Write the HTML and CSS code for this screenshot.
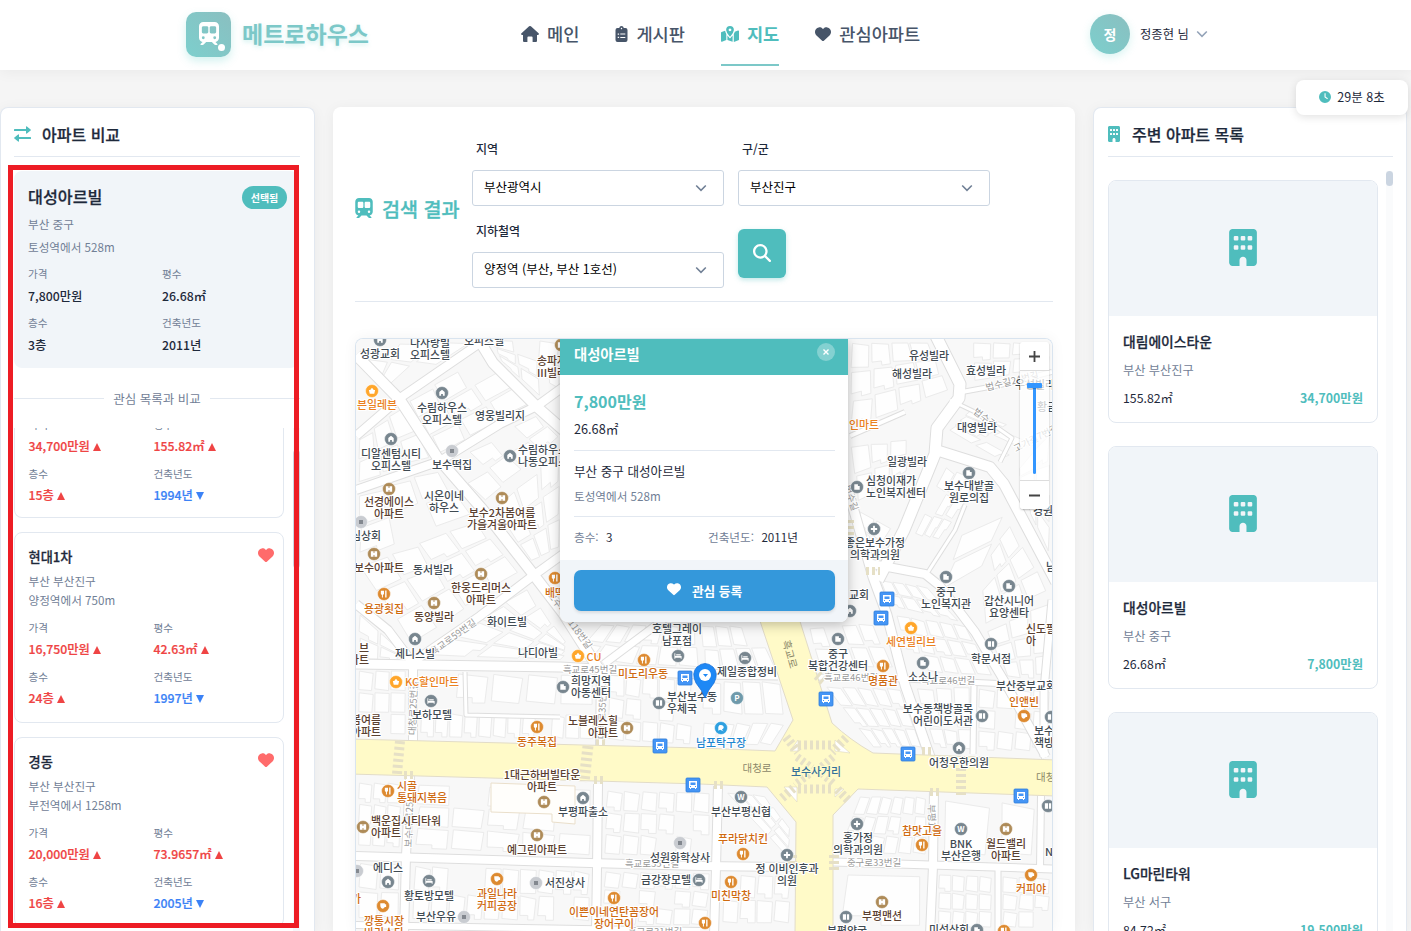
FILE: index.html
```html
<!DOCTYPE html>
<html lang="ko">
<head>
<meta charset="utf-8">
<title>메트로하우스</title>
<link rel="stylesheet" href="styles.css">
</head>
<body>
<svg class="sprite" aria-hidden="true">
  <symbol id="i-heart" viewBox="0 0 512 512"><path d="M47.6 300.4L228.3 469.1c7.5 7 17.4 10.9 27.7 10.9s20.2-3.9 27.7-10.9L464.4 300.4c30.4-28.3 47.6-68 47.6-109.5v-5.8c0-69.9-50.5-129.5-119.4-141C347 36.5 300.6 51.4 268 84L256 96 244 84c-32.6-32.6-79-47.5-124.6-39.9C50.5 55.6 0 115.2 0 185.1v5.8c0 41.5 17.2 81.2 47.6 109.5z"/></symbol>
  <symbol id="i-train" viewBox="0 0 448 512"><path d="M96 0C43 0 0 43 0 96V352c0 48 35.2 87.7 81.1 94.9l-46 46C28.1 499.9 33.1 512 43 512H82.7c8.5 0 16.6-3.4 22.6-9.4L160 448H288l54.6 54.6c6 6 14.1 9.4 22.6 9.4H405c10 0 15-12.1 7.9-19.1l-46-46c46-7.1 81.1-46.9 81.1-94.9V96c0-53-43-96-96-96H96zM64 128c0-17.7 14.3-32 32-32h80c17.7 0 32 14.3 32 32v96c0 17.7-14.3 32-32 32H96c-17.7 0-32-14.3-32-32V128zM272 96h80c17.7 0 32 14.3 32 32v96c0 17.7-14.3 32-32 32H272c-17.7 0-32-14.3-32-32V128c0-17.7 14.3-32 32-32zM64 352a32 32 0 1 1 64 0 32 32 0 1 1-64 0zm288-32a32 32 0 1 1 0 64 32 32 0 1 1 0-64z"/></symbol>
  <symbol id="i-search" viewBox="0 0 512 512"><path d="M416 208c0 45.900-14.900 88.300-40 122.700L502.600 457.400c12.500 12.500 12.500 32.800 0 45.300s-32.800 12.500-45.300 0L330.700 376c-34.400 25.200-76.800 40-122.700 40C93.100 416 0 322.900 0 208S93.100 0 208 0S416 93.100 416 208zM208 352a144 144 0 1 0 0-288 144 144 0 1 0 0 288z"/></symbol>
  <symbol id="i-building" viewBox="0 0 384 512"><path fill-rule="evenodd" d="M48 0C21.500 0 0 21.500 0 48V464c0 26.500 21.500 48 48 48h96V432c0-26.500 21.500-48 48-48s48 21.500 48 48v80h96c26.500 0 48-21.500 48-48V48c0-26.500-21.500-48-48-48H48zM80 96h32q16 0 16 16v32q0 16-16 16H80q-16 0-16-16v-32q0-16 16-16zM176 96h32q16 0 16 16v32q0 16-16 16h-32q-16 0-16-16v-32q0-16 16-16zM272 96h32q16 0 16 16v32q0 16-16 16h-32q-16 0-16-16v-32q0-16 16-16zM80 224h32q16 0 16 16v32q0 16-16 16H80q-16 0-16-16v-32q0-16 16-16zM176 224h32q16 0 16 16v32q0 16-16 16h-32q-16 0-16-16v-32q0-16 16-16zM272 224h32q16 0 16 16v32q0 16-16 16h-32q-16 0-16-16v-32q0-16 16-16z"/></symbol>
  <symbol id="i-home" viewBox="0 0 18 16"><path d="M9 0q.5 0 .9.300L17.600 7.200q.7.700.1 1.400-.2.300-.8.300H16v6q0 1.100-1.100 1.100h-3.300V11.500q0-1-1-1H7.400q-1 0-1 1V16H3.100Q2 16 2 14.900v-6h-.9Q.1 8.900.1 8q0-.5.4-.8L8.100.300Q8.500 0 9 0z"/></symbol>
  <symbol id="i-board" viewBox="0 0 12 16"><path fill-rule="evenodd" d="M6 0q1.900 0 2.300 2H10q2 0 2 2v10q0 2-2 2H2q-2 0-2-2V4q0-2 2-2h1.700Q4.100 0 6 0zM6 1.800a.7.700 0 1 0 .01 0zM2.200 7.400h1.400v1.300H2.200zM4.800 7.500h5v1.100h-5zM2.200 10.800h1.400v1.300H2.200zM4.800 10.900h5V12h-5z"/></symbol>
  <symbol id="i-map" viewBox="0 0 18 16"><path fill-rule="evenodd" d="M9 0q3.800.2 3.900 3.900Q12.700 6.400 9.500 10.200q-.5.500-1 0Q5.300 6.400 5.100 3.900 5.200.2 9 0zm0 2.500a1.400 1.400 0 1 0 .01 0zM4.100 4.800q.4 1.800 1.200 3.100V14L1 15.700Q0 16 0 15V6.800q0-.5.600-.8zM6.400 9.600 9 12.500l2.600-2.900v6.200L6.400 14.100zM12.800 8q.8-1.400 1-2.200l3.200-1.300q1-.2 1 .7v8.200q0 .5-.6.800l-4.600 1.700z"/></symbol>
  <symbol id="i-swap" viewBox="0 0 17 16"><path d="M0 3.600Q0 3 .7 3H12V1q0-1 .9-.5l3.700 3q.7.500 0 1l-3.700 3Q12 8 12 7V5H.7Q0 5 0 4.400zM17 11.600q0-.6-.7-.6H5V9q0-1-.9-.5l-3.700 3q-.7.500 0 1l3.700 3Q5 16 5 15v-2h11.300q.7 0 .7-.6z"/></symbol>
  <symbol id="i-clock" viewBox="0 0 12 12"><path fill-rule="evenodd" d="M6 0a6 6 0 1 1 0 12A6 6 0 0 1 6 0zM5.500 2.300v4l2.800 1.900.6-.9-2.300-1.500V2.300z"/></symbol>
  <symbol id="i-down" viewBox="0 0 12 8"><path d="M1.200 1.500 6 6.300l4.800-4.800" fill="none" stroke="currentColor" stroke-width="1.600"/></symbol>
</svg>

<header class="topbar">
  <a class="logo"><span class="logo-mark"><svg><use href="#i-train"/></svg><i></i></span><b>메트로하우스</b></a>
  <nav class="menu">
    <a><svg class="w18"><use href="#i-home"/></svg>메인</a>
    <a><svg class="w12"><use href="#i-board"/></svg>게시판</a>
    <a class="on"><svg class="w18"><use href="#i-map"/></svg>지도</a>
    <a><svg class="w16"><use href="#i-heart"/></svg>관심아파트</a>
  </nav>
  <div class="user"><span class="avatar">정</span><span>정종현 님</span><svg class="caret"><use href="#i-down"/></svg></div>
</header>
<div class="timer"><svg><use href="#i-clock"/></svg>29분 8초</div>

<main class="cols">
  <section class="panel compare">
    <h2><svg class="swap"><use href="#i-swap"/></svg>아파트 비교</h2>
    <div class="chosen">
      <div class="chosen-head"><b>대성아르빌</b><em>선택됨</em></div>
      <p>부산 중구</p><p>토성역에서 528m</p>
      <dl class="facts">
        <div><dt>가격</dt><dd>7,800만원</dd></div><div><dt>평수</dt><dd>26.68㎡</dd></div>
        <div><dt>층수</dt><dd>3층</dd></div><div><dt>건축년도</dt><dd>2011년</dd></div>
      </dl>
    </div>
    <div class="divider"><span>관심 목록과 비교</span></div>
    <div class="scroll">
      <div class="stack">
        <article class="fav first">
          <dl class="facts">
            <div><dt>가격</dt><dd class="up">34,700만원</dd></div><div><dt>평수</dt><dd class="up">155.82㎡</dd></div>
            <div><dt>층수</dt><dd class="up">15층</dd></div><div><dt>건축년도</dt><dd class="down">1994년</dd></div>
          </dl>
        </article>
        <article class="fav">
          <b>현대1차</b><svg class="like"><use href="#i-heart"/></svg>
          <p>부산 부산진구</p><p>양정역에서 750m</p>
          <dl class="facts">
            <div><dt>가격</dt><dd class="up">16,750만원</dd></div><div><dt>평수</dt><dd class="up">42.63㎡</dd></div>
            <div><dt>층수</dt><dd class="up">24층</dd></div><div><dt>건축년도</dt><dd class="down">1997년</dd></div>
          </dl>
        </article>
        <article class="fav">
          <b>경동</b><svg class="like"><use href="#i-heart"/></svg>
          <p>부산 부산진구</p><p>부전역에서 1258m</p>
          <dl class="facts">
            <div><dt>가격</dt><dd class="up">20,000만원</dd></div><div><dt>평수</dt><dd class="up">73.9657㎡</dd></div>
            <div><dt>층수</dt><dd class="up">16층</dd></div><div><dt>건축년도</dt><dd class="down">2005년</dd></div>
          </dl>
        </article>
      </div>
      <div class="track"><i></i></div>
    </div>
  </section>

  <section class="panel result">
    <div class="finder">
      <h1><svg><use href="#i-train"/></svg>검색 결과</h1>
      <form class="fields">
        <label>지역<span class="select">부산광역시<svg><use href="#i-down"/></svg></span></label>
        <label>구/군<span class="select">부산진구<svg><use href="#i-down"/></svg></span></label>
        <label>지하철역<span class="select">양정역 (부산, 부산 1호선)<svg><use href="#i-down"/></svg></span></label>
        <button type="button" class="go"><svg><use href="#i-search"/></svg></button>
      </form>
    </div>
    <div class="map">
      <svg id="canvas" viewBox="356 339 696 592"></svg>
      <div class="popup">
        <header><b>대성아르빌</b><span class="close"><svg viewBox="0 0 8 8"><path d="M1.500 1.500l5 5m0-5l-5 5"/></svg></span></header>
        <div class="popup-body">
          <div class="cost"><strong>7,800만원</strong><span>26.68㎡</span></div>
          <div class="place"><span>부산 중구 대성아르빌</span><small>토성역에서 528m</small></div>
          <div class="more"><span><small>층수:</small>3</span><span><small>건축년도:</small>2011년</span></div>
        </div>
        <footer><button type="button"><svg><use href="#i-heart"/></svg>관심 등록</button></footer>
      </div>
      <div class="zoomer"><span><svg viewBox="0 0 12 12"><path d="M0 6h12M6 0v12"/></svg></span><div class="rail"><i></i><b></b></div><span><svg viewBox="0 0 12 12"><path d="M0 6h12"/></svg></span></div>
    </div>
  </section>

  <section class="panel nearby">
    <h2><svg class="bldg"><use href="#i-building"/></svg>주변 아파트 목록</h2>
    <div class="listing">
      <div class="cards">
        <article class="apt"><div class="photo"><svg><use href="#i-building"/></svg></div><b>대림에이스타운</b><p>부산 부산진구</p><div class="row"><span>155.82㎡</span><strong>34,700만원</strong></div></article>
        <article class="apt"><div class="photo"><svg><use href="#i-building"/></svg></div><b>대성아르빌</b><p>부산 중구</p><div class="row"><span>26.68㎡</span><strong>7,800만원</strong></div></article>
        <article class="apt"><div class="photo"><svg><use href="#i-building"/></svg></div><b>LG마린타워</b><p>부산 서구</p><div class="row"><span>84.72㎡</span><strong>19,500만원</strong></div></article>
      </div>
      <div class="track"><i></i></div>
    </div>
  </section>
</main>
<div class="frame"></div>
<script src="map.js"></script>
</body>
</html>
```
FILE: styles.css
```css
* { box-sizing: border-box; margin: 0; padding: 0; }
body { height: 931px; overflow: hidden; background: #f5f5f5; color: #1e293b; font-family: "Noto Sans CJK KR", "Noto Sans", sans-serif; font-size: 12px; }
svg { fill: currentColor; display: block; flex: none; }
.sprite { position: absolute; width: 0; height: 0; }
button { border: 0; font: inherit; color: #fff; display: flex; align-items: center; justify-content: center; }

.topbar { height: 70px; background: #fff; display: flex; align-items: flex-start; padding-left: 186px; box-shadow: 0 2px 14px rgba(0,0,0,.05); position: relative; }
.logo { display: flex; align-items: center; gap: 11px; width: 335px; height: 69px; }
.logo-mark { width: 45px; height: 45px; border-radius: 10px; background: linear-gradient(45deg, #7ccfcd, #8abfc0); box-shadow: 0 4px 9px rgba(78,205,196,.25); position: relative; display: grid; place-items: center; color: #fff; }
.logo-mark svg { width: 20px; height: 23px; margin-top: -3px; }
.logo-mark i { position: absolute; right: 6px; bottom: 6px; width: 7px; height: 7px; border-radius: 50%; background: #fff; }
.logo b { font-size: 23px; padding-bottom: 3px; color: #7cc8c8; text-shadow: 0 2px 4px rgba(78,205,196,.25); }
.menu { display: flex; height: 70px; gap: 36px; width: 569px; }
.menu a { display: flex; align-items: center; gap: 8px; height: 66px; padding-top: 3px; font-size: 17.600px; font-weight: 500; color: #475569; white-space: nowrap; border-bottom: 2px solid transparent; }
.menu .on { color: #4fbdbd; border-color: #7cc8c8; font-weight: 600; }
.w18 { width: 18px; height: 16px; } .w16 { width: 16px; height: 16px; } .w12 { width: 13px; height: 16px; }
.user { display: flex; align-items: center; font-size: 12.300px; height: 68px; }
.avatar { width: 40px; height: 40px; border-radius: 50%; background: linear-gradient(45deg, #7ccfcd, #8abfc0); color: #fff; font-weight: 700; font-size: 14px; display: grid; place-items: center; margin-right: 10px; box-shadow: 0 3px 8px rgba(78,205,196,.22); }
.caret { width: 12px; height: 8px; margin-left: 7px; color: #94a3b8; }
.timer { position: absolute; z-index: 3; right: 3px; top: 80px; width: 112px; height: 35px; background: #fff; border-radius: 8px; box-shadow: 0 2px 8px rgba(0,0,0,.12); display: flex; align-items: center; justify-content: center; gap: 6px; font-size: 12.500px; padding-bottom: 2px; }
.timer svg { width: 12px; height: 12px; color: #4fbdbd; }

.cols { display: grid; grid-template-columns: 314px 742px 314px; gap: 18px; padding: 37px 0 0 1px; height: 861px; }
.panel { background: #fff; border: 1px solid #e2e8f0; border-bottom: 0; border-radius: 8px 8px 0 0; overflow: hidden; box-shadow: 0 2px 14px rgba(0,0,0,.05); }
.compare, .nearby { padding: 0 14px 0 13px; display: flex; flex-direction: column; }
.nearby { padding: 0 13px 0 14px; }
.panel h2 { height: 49px; padding-top: 4px; border-bottom: 1px solid #e2e8f0; display: flex; align-items: center; font-size: 16px; font-weight: 500; -webkit-text-stroke: .25px; flex: none; }
.compare { margin-left: -1px; }
.swap { width: 17px; height: 16px; margin-right: 11px; color: #4fbdbd; }
.bldg { width: 12px; height: 16px; margin-right: 12px; color: #4fbdbd; }

.chosen { margin: 14px 2px 0 0; width: 284px; height: 197px; flex: none; background: #f1f5f9; border-radius: 8px; padding: 15px 11px 0 14px; }
.chosen-head { display: flex; justify-content: space-between; align-items: center; height: 23px; margin-bottom: 4px; font-size: 16.200px; }
.chosen-head b { font-weight: 500; padding-bottom: 3px; -webkit-text-stroke: .25px; }
.chosen-head em { font-style: normal; font-weight: 600; font-size: 10px; color: #fff; background: #4fbdbd; width: 45px; height: 23px; border-radius: 12px; display: grid; place-items: center; }
.chosen p { line-height: 23px; font-size: 11.600px; color: #718096; }
.chosen .facts { grid-template-columns: 134px 1fr; row-gap: 5px; margin-top: 4px; }
.facts { display: grid; }
.facts dt { font-size: 10.600px; line-height: 22px; color: #718096; }
.facts dd { font-size: 12.300px; line-height: 22px; font-weight: 500; }

.divider { display: flex; align-items: center; gap: 9px; height: 60px; padding-top: 1px; flex: none; color: #718096; font-size: 12.500px; }
.divider::before, .divider::after { content: ""; flex: 1; height: 1px; background: #e2e8f0; }
.scroll { flex: 1; min-height: 0; overflow: hidden; display: flex; justify-content: space-between; }
.stack { width: 270px; display: flex; flex-direction: column; gap: 14px; }
.fav { position: relative; height: 190.500px; flex: none; border: 1px solid #e2e8f0; border-radius: 8px; padding: 14px 13.500px; }
.fav.first { height: 90px; padding-top: 0; border-top: 0; border-radius: 0 0 8px 8px; }
.fav > b { display: block; line-height: 20px; margin-bottom: 5px; font-size: 13.200px; font-weight: 500; -webkit-text-stroke: .25px; }
.like { position: absolute; right: 9px; top: 14px; width: 16px; height: 16px; color: #ff6b6b; }
.fav p { line-height: 19px; font-size: 11.600px; color: #718096; }
.fav .facts { grid-template-columns: 125px 1fr; row-gap: 6px; margin-top: 7px; }
.fav.first .facts { margin-top: -14px; }
.fav dt { line-height: 21px; }
.fav dd { font-weight: 500; -webkit-text-stroke: .2px; }
.up { color: #ef4444; } .down { color: #3b82f6; }
.up::after, .down::after { content: ""; display: inline-block; border: 4.500px solid transparent; margin-left: 3px; }
.up::after { border-bottom: 8px solid #ef4444; border-top: 0; }
.down::after { border-top: 8px solid #3b82f6; border-bottom: 0; }
.track { width: 7px; background: #f5f7fa; }
.track i { display: block; width: 7px; height: 118px; margin-top: 22px; border-radius: 4px; background: #cbd5e1; }
.frame { position: absolute; z-index: 4; left: 8px; top: 165px; width: 291px; height: 763px; border: 5px solid #ed1c24; }

.result { border-color: #fff; padding: 0 21px; display: flex; flex-direction: column; }
.finder { display: flex; align-items: center; height: 194px; flex: none; border-bottom: 1px solid #e2e8f0; }
.finder h1 { display: flex; align-items: center; gap: 9px; width: 117px; padding-top: 7px; font-size: 19.600px; font-weight: 500; -webkit-text-stroke: .35px; color: #4fbdbd; white-space: nowrap; }
.finder h1 svg { width: 18px; height: 20px; }
.fields { display: grid; grid-template-columns: 252px 252px; gap: 6px 14px; padding-top: 25px; height: 194px; align-content: start; }
.fields label { height: 76px; line-height: 32px; font-size: 12px; font-weight: 500; text-indent: 4px; }
.select { display: flex; align-items: center; justify-content: space-between; height: 36px; margin-top: 5px; border: 1px solid #cbd5e1; border-radius: 3px; padding: 0 16px 2px 7px; font-size: 12.500px; color: #000; font-weight: 400; }
.select svg { width: 12px; height: 8px; color: #718096; margin-top: 2px; }
.go { width: 48px; height: 49px; margin-top: 14px; border-radius: 6px; background: #4fbdbd; box-shadow: 0 2px 5px rgba(79,189,189,.35); }
.go svg { width: 18px; height: 18px; }
.map { position: relative; margin-top: 36px; flex: 1; border: 1px solid #d9e4ef; border-bottom: 0; border-radius: 8px 8px 0 0; overflow: hidden; box-shadow: 0 0 14px rgba(0,0,0,.05); }
#canvas { width: 696px; height: 592px; background: #f8f8f8; }

.popup { position: absolute; left: 204px; top: 0; width: 288px; height: 283px; background: #fff; border-radius: 0 0 8px 8px; box-shadow: 0 3px 12px rgba(0,0,0,.25); overflow: hidden; display: flex; flex-direction: column; }
.popup header { height: 36px; background: #4fbdbd; color: #fff; display: flex; justify-content: space-between; padding: 4px 13px 0 14px; font-size: 14.300px; line-height: 21px; }
.popup header b { font-weight: 600; }
.close { width: 18px; height: 18px; border-radius: 50%; background: rgba(255,255,255,.3); display: grid; place-items: center; }
.close svg { width: 8px; height: 8px; stroke: #fff; stroke-width: 1.400; }
.popup-body { flex: 1; padding: 10px 13px 0 14px; }
.cost, .place { display: flex; flex-direction: column; border-bottom: 1px solid #e2e8f0; }
.cost { height: 66px; line-height: 28px; font-size: 12.700px; padding-top: 2px; }
.cost strong { font-size: 16px; font-weight: 600; color: #4fbdbd; }
.place { height: 66px; padding-top: 7px; line-height: 26px; font-size: 12.600px; }
.place small { font-size: 11.600px; line-height: 24px; }
.popup small { color: #718096; }
.more { display: grid; grid-template-columns: 134px 1fr; line-height: 40px; font-size: 11.600px; }
.more small { font-size: 11.600px; margin-right: 7.500px; }
.popup footer { height: 62px; background: #f1f5f9; padding: 10px 13px 0 14px; }
.popup footer button { width: 261px; height: 41px; border-radius: 7px; background: #3498db; gap: 11px; font-size: 12.700px; font-weight: 700; box-shadow: 0 2px 3px rgba(0,0,0,.1); }
.popup footer svg { width: 14px; height: 14px; margin-top: -3px; }

.zoomer { position: absolute; left: 664px; top: 3px; width: 29px; height: 167px; border-radius: 3px; box-shadow: 0 1px 2px rgba(0,0,0,.25); overflow: hidden; }
.zoomer span { display: grid; place-items: center; height: 28px; background: #fff; }
.zoomer span svg { width: 11px; height: 11px; stroke: #444; stroke-width: 2; }
.rail { position: relative; height: 111px; background: rgba(255,255,255,.75); border: solid #ddd; border-width: 1px 0; }
.rail i { position: absolute; left: 13px; top: 12px; width: 3px; height: 91px; background: #3396ff; border-radius: 2px; }
.rail b { position: absolute; left: 7px; top: 12px; width: 15px; height: 5px; background: #3396ff; border-radius: 1px; box-shadow: 0 1px 1px rgba(0,0,0,.2); }

.listing { flex: 1; min-height: 0; display: flex; justify-content: space-between; overflow: hidden; }
.nearby .track { background: #fafbfc; margin-top: 14px; }
.nearby .track i { height: 15px; margin-top: 0; }
.cards { width: 270px; padding-top: 23px; display: flex; flex-direction: column; gap: 23px; }
.apt { height: 243px; flex: none; border: 1px solid #e2e8f0; border-radius: 8px; overflow: hidden; }
.photo { height: 135px; background: #f1f5f9; display: grid; place-items: center; color: #4fbdbd; margin-bottom: 11px; }
.photo svg { width: 28px; height: 37px; margin-top: -2px; }
.apt b, .apt p, .row { display: block; padding: 0 14px; }
.apt b { font-size: 13.800px; font-weight: 500; line-height: 28px; -webkit-text-stroke: .25px; }
.apt p { font-size: 12.200px; line-height: 30px; color: #718096; }
.row { display: flex; justify-content: space-between; line-height: 27px; font-size: 12.300px; }
.row strong { font-weight: 600; color: #4fbdbd; }

.bld { fill: #fefefe; stroke: #ebebeb; stroke-width: 1; }
.edge { fill: none; stroke: #dedede; stroke-linejoin: round; }
.road { fill: none; stroke: #fff; stroke-linejoin: round; }
.main { fill: #fffac8; stroke: #e2dcc8; stroke-width: 1; }
.isle { fill: #fff; stroke: #ddd8c0; stroke-width: .6; }
.zebra { fill: none; stroke: #e6e0c6; stroke-dasharray: 3 3; }
.lbl { font-size: 10.900px; font-weight: 500; fill: #3f4a52; stroke: #fff; stroke-width: 2.200px; paint-order: stroke; stroke-linejoin: round; }
.lbl.a { fill: #5a4030; } .lbl.o { fill: #cf6a10; } .lbl.y { fill: #ea8020; } .lbl.b { fill: #1f86cf; } .lbl.x { fill: #33709a; stroke: #fffac8; }
.lbl.r { fill: #999; font-size: 9.500px; font-weight: 400; } .lbl.m { fill: #8b8768; stroke: #fffac8; font-size: 10.500px; font-weight: 400; }
.glyph { fill: #fff; }
```
FILE: map.js
```js
(function () {
  var NS = 'http://www.w3.org/2000/svg';
  var svg = document.getElementById('canvas');
  function add(tag, attrs, text, parent) {
    var e = document.createElementNS(NS, tag);
    for (var k in attrs) e.setAttribute(k, attrs[k]);
    if (text) e.textContent = text;
    (parent || svg).appendChild(e);
    return e;
  }
  var seed = 7;
  function rnd() { seed = (seed * 16807) % 2147483647; return seed / 2147483647; }

  // Building blocks: four corners, columns, rows
  var blocks = [
    [[358,345],[475,340],[400,392],[372,372],3,2],
    [[407,402],[482,352],[530,404],[440,455],3,3],
    [[358,440],[402,405],[432,458],[358,484],3,2],
    [[490,340],[560,340],[560,415],[502,362],3,3],
    [[445,465],[535,414],[560,436],[486,502],4,2],
    [[358,495],[436,468],[474,514],[358,560],3,2],
    [[492,510],[560,448],[560,548],[532,562],3,3],
    [[358,566],[476,520],[520,572],[412,646],4,3],
    [[358,612],[400,650],[400,660],[358,660],2,2],
    [[428,656],[526,586],[566,642],[566,660],4,3],
    [[358,670],[406,670],[406,735],[358,735],3,3],
    [[420,672],[594,674],[594,706],[420,704],5,1],
    [[420,712],[594,714],[594,740],[420,738],12,1],
    [[608,674],[692,680],[692,745],[608,741],5,3],
    [[600,624],[695,624],[700,668],[570,662],6,2],
    [[700,625],[755,625],[776,668],[705,672],4,2],
    [[702,680],[780,680],[786,716],[702,716],4,1],
    [[702,722],[786,722],[772,746],[702,745],5,1],
    [[358,782],[402,782],[400,848],[358,846],3,3],
    [[416,784],[592,789],[592,856],[414,849],5,3],
    [[606,790],[710,792],[710,858],[604,855],6,3],
    [[726,792],[764,795],[790,828],[790,860],3,3],
    [[358,862],[400,863],[399,920],[358,919],2,2],
    [[414,865],[590,870],[590,922],[412,920],10,2],
    [[604,871],[710,873],[708,926],[602,925],6,3],
    [[722,874],[791,875],[790,924],[722,924],4,2],
    [[808,628],[872,622],[895,668],[820,668],4,2],
    [[825,686],[900,688],[922,748],[874,748],5,3],
    [[915,688],[970,686],[972,750],[935,748],3,3],
    [[978,688],[1050,690],[1050,752],[978,751],4,3],
    [[896,615],[965,625],[994,676],[912,672],5,3],
    [[860,796],[926,796],[927,855],[838,854],6,3],
    [[942,798],[992,800],[992,858],[942,856],1,1],
    [[1000,800],[1036,802],[1036,858],[1000,856],1,1],
    [[838,872],[924,874],[924,928],[838,928],1,1],
    [[938,874],[992,876],[992,928],[938,928],4,3],
    [[1002,876],[1050,878],[1050,928],[1002,928],3,3],
    [[850,342],[928,342],[950,390],[850,430],4,3],
    [[972,342],[1050,342],[1050,368],[974,382],4,2],
    [[850,446],[926,436],[926,458],[858,505],4,2],
    [[948,430],[968,410],[1050,440],[1000,460],4,2],
    [[1018,470],[1050,430],[1050,556],[1024,500],2,4],
    [[858,510],[892,528],[872,560],[860,545],2,2],
    [[914,536],[945,466],[980,480],[940,540],3,3],
    [[940,592],[960,535],[1005,515],[985,565],2,1],
    [[980,574],[1008,522],[1050,590],[985,625],3,3],
    [[880,580],[926,586],[960,622],[890,606],4,2],
    [[985,632],[1050,600],[1050,680],[1008,678],3,3]
  ];
  blocks.forEach(function (b) {
    var c = b[4], r = b[5];
    function at(u, v) {
      return [0, 1].map(function (i) {
        return b[0][i] * (1 - u) * (1 - v) + b[1][i] * u * (1 - v) + b[2][i] * u * v + b[3][i] * (1 - u) * v;
      });
    }
    for (var i = 0; i < c; i++) for (var j = 0; j < r; j++) {
      if (c * r > 4 && rnd() < .08) continue;
      var g = .05, j1 = rnd() * .1, j2 = rnd() * .12;
      var pts = [at((i + g + j1) / c, (j + g) / r), at((i + 1 - g) / c, (j + g + j2) / r),
        at((i + 1 - g - j2) / c, (j + 1 - g) / r), at((i + g) / c, (j + 1 - g - j1) / r)];
      if (rnd() < .3) {
        pts.splice(3, 0, at((i + .5) / c, (j + 1 - g) / r), at((i + .5) / c, (j + .78) / r), at((i + g) / c, (j + .78) / r));
        pts.pop();
      }
      add('polygon', { points: pts.map(function (p) { return p[0].toFixed(1) + ',' + p[1].toFixed(1); }).join(' '), 'class': 'bld' });
    }
  });
  add('path', { d: 'M491 783L575 786V824L552 822V814L491 812z', fill: '#fffefb', stroke: '#eadfcb' });

  var roads = [
    [10, '356,355 400,400 437,457 483,510 530,570 563,613 598,668'],
    [10, '476,335 493,363 537,407 570,436'],
    [8, '356,436 400,398 477,345 490,336'],
    [8, '356,490 440,461 500,424 537,406 570,382'],
    [8, '413,662 480,616 530,578 566,552'],
    [8, '356,604 388,630 412,662'],
    [9, '356,664 560,667 650,672 700,674 778,675'],
    [7, '604,664 655,626 668,616'],
    [8, '413,666 413,742'], [8, '601,668 600,746'],
    [8, '410,776 406,856 404,935'], [8, '598,784 597,868 596,930'],
    [8, '356,856 590,863 700,866 796,867'],
    [7, '833,862 930,865 1055,869'],
    [6, '356,925 700,931'], [8, '718,786 716,868 714,935'],
    [9, '848,490 873,577 887,615 905,685 930,757'],
    [8, '934,790 933,866 930,935'],
    [11, '934,332 960,384 959,398 937,428 935,454 904,530 878,580'],
    [10, '936,450 990,467 1004,484 1056,582'],
    [8, '872,564 925,574 940,586 975,632 1006,684 1046,757'],
    [5, '815,677 905,679 1052,686'], [5, '974,686 973,754'], [5, '998,868 998,935'],
    [4, '962,392 1000,385 1052,372'], [3, '950,400 975,412 1012,438 1000,462'], [4, '850,436 905,412'],
    [3, '965,505 955,530 928,572'], [3, '465,672 466,715 560,717'],
    [7, '1044,757 1044,690 1052,600'], [6, '1041,796 1040,868']
  ];
  roads.forEach(function (r) { add('polyline', { points: r[1], 'class': 'edge', 'stroke-width': r[0] + 2 }); });
  roads.forEach(function (r) { add('polyline', { points: r[1], 'class': 'road', 'stroke-width': r[0] }); });
  add('path', { 'class': 'main', d: 'M350 739L700 748 775 751 793 720 758 615H798L832 723Q850 740 873 753L1056 760V796L858 789 833 815V935H795L796 822 767 787 700 784 350 774z' });
  ['M798 740V751H790zM835 740L850 753 835 751zM784 787H797V802zM835 789H844L835 797z'].forEach(function (d) { add('path', { d: d, 'class': 'isle' }); });
  [[10,'M400 741L397 774'],[11,'M588 746L584 782'],[10,'M961 762V795'],[9,'M798 745H832'],[9,'M798 789H832'],
   [8,'M797 757L812 768'],[8,'M833 757L820 768'],[8,'M797 783L812 772'],[8,'M833 783L820 772'],
   [9,'M786 737L798 752'],[9,'M846 738L832 752'],[9,'M782 798L796 786'],[9,'M848 800L836 788'],
   [10,'M817 675L825 682'],[10,'M792 855V870'],[10,'M834 855V870'],[8,'M714 785H724'],[8,'M930 792H940'],[8,'M922 751H934'],
   [8,'M404 775H416'],[8,'M594 780H606'],[8,'M866 571H880'],[8,'M850 520V535'],[8,'M596 741H606']].forEach(function (z) {
    add('path', { d: z[1], 'class': 'zebra', 'stroke-width': z[0] });
  });

  // Labels: lines, x, y of the first line's centre, class, anchor
  var labels = [
    ['성광교회',380,354],['다사랑빌|오피스텔',430,343],['오피스텔',484,341],['송파자이|III빌라',537,361,'a','s'],['븐일레븐',377,405,'y'],
    ['수림하우스|오피스텔',442,408],['영웅빌리지',500,416],['디알센텀시티|오피스텔',391,454],['보수떡집',452,465],['수림하우스|나동오피스텔',518,450,'','s'],
    ['선경에이스|아파트',389,502,'a'],['시온이네|하우스',444,496],['보수2차봄여름|가을겨울아파트',502,513,'a'],['심상회',366,536],['보수아파트',379,568,'a'],
    ['동서빌라',433,570],['한웅드리머스|아파트',481,588,'a'],['용광횟집',384,609,'o'],['동양빌라',434,617,'a'],['화이트빌',507,622],['배떡',545,593,'o','s'],
    ['제니스빌',415,654],['나디아빌',538,653],['CU',594,657,'y'],['미도리우동',643,674,'o'],['호텔그레이|남포점',677,629],['KC할인마트',432,682,'y'],['보하모텔',432,715],
    ['희망지역|아동센터',571,681,'','s'],['부산보수동|우체국',667,697,'','s'],['노블레스힐|아파트',618,721,'a','e'],['동주복집',537,742,'o'],['봄여름|아파트',381,720,'a','e'],['브|아파트',369,648,'a','e'],
    ['1대근하버빌타운|아파트',542,775,'a'],['시골|통돼지볶음',397,786,'o','s'],['부평파출소',583,812],['백운집시티타워|아파트',371,821,'a','s'],['예그린아파트',537,850,'a'],['에디스',388,868],
    ['성원화학상사',680,858],['황토방모텔',429,896],['과일나라|커피공장',497,894,'o'],['서진상사',545,883,'','s'],['금강장모텔',691,880,'','e'],['이쁜이네연탄꼼장어|장어구이',614,912,'o'],
    ['부산우유',436,917],['깡통시장|바리스타',384,921,'o'],['제일종합정비',717,672,'','s'],['남포탁구장',721,743,'b'],['중구|복합건강센터',838,654],['세연빌리브',911,642,'y'],['명품관',883,681,'o'],
    ['소소나',923,677],['학문서점',991,659],['신도필|아',1026,629,'a','s'],['부산중부교회',996,686,'','s'],['인앤빈',1024,702,'o'],['보수동책방골목|어린이도서관',973,709,'','e'],['어청우한의원',959,763],
    ['보수동|책방골',1034,731,'','s'],['부산부평신협',741,812],['푸라닭치킨',743,839,'o'],['홍가정|의학과의원',858,838],['참맛고을',922,831,'o'],['BNK|부산은행',961,844],['월드밸리|아파트',1006,844,'a'],
    ['정 이비인후과|의원',787,869],['미친막창',731,896,'o'],['커피야',1031,889,'o'],['부평맨션',882,916,'a'],['부평약국',847,931],['미성상회',949,930],['보수사거리',816,772,'x'],['N',1045,852,'','s'],
    ['대청로',757,768,'m'],['대청로',1036,777,'m','s'],['유성빌라',929,356],['해성빌라',912,374],['효성빌라',986,371],['인마트',849,425,'y','s'],['대영빌라',977,428],['일광빌라',907,462],
    ['심청이재가|노인복지센터',866,481,'','s'],['보수대밭골|원로의집',969,486],['좋은보수가정|의학과의원',875,543],['중구|노인복지관',946,592],['갑산시니어|요양센타',1009,601],['경원',1033,511,'','s'],
    ['교회',849,595,'','s'],['남',1046,567,'','s'],['우성빌라',1015,385,'','s'],['황금',1037,407,'','s'],['카',356,899,'o']
  ];
  var streets = [['흑교로45번길',590,669,0],['흑교로35번길',652,863,0],['중구로33번길',874,862,0],['흑교로46번길',851,677,0],['흑교로46번길',948,680,0],['대청로25번길',413,708,-88],
    ['보수대로256',409,822,-88],['대청로35번길',602,712,-88],['흑교로59번길',453,637,-36],['보수대로118번길',570,620,54],['법수길24번길',1012,381,-14],['법수길',985,418,38],['고가길7번길',1036,438,-27],['부평1길',932,820,88],['흑교로31번길',655,931,0],['법수길',851,498,70]];
  streets.forEach(function (s) {
    add('text', { x: s[1], y: s[2] + 3.500, 'text-anchor': 'middle', 'class': 'lbl r', transform: 'rotate(' + s[3] + ' ' + s[1] + ' ' + s[2] + ')' }, s[0]);
  });
  add('text', { x: 790, y: 658, 'text-anchor': 'middle', 'class': 'lbl m', transform: 'rotate(74 790 654)' }, '흑교로');

  var color = { h: '#78868f', a: '#ae8b58', f: '#dd8a30', c: '#dd8a30', s: '#ffa62b', d: '#c9ccd1', b: '#78868f', w: '#78868f', p: '#6f9aab', t: '#2ea0e0', m: '#78868f', k: '#78868f', l: '#78868f' };
  var glyph = {
    h: 'M-3 3V-1L0-3.500 3-1V3H1V1H-1V3z', a: 'M-3.500-3H-.5V3H-3.500zM.5-3H3.500V3H.5zM-1-1H1V1H-1z',
    f: 'M-3.500-3.500H0V0L-1.200 1V4H-2.300V1L-3.500 0zM1.300-4H2.800V4H1.300z', c: 'M-3-3H2V-2H3.500V1H2Q1 3-.5 3-3 2.500-3-1z',
    s: 'M-3.500-1H-2L0-3.500 2-1H3.500L2.500 3H-2.500z', d: 'M-2-2H2V2H-2z', m: 'M-1-3.500H1V-1H3.500V1H1V3.500H-1V1H-3.500V-1H-1z',
    b: 'M-4-3H-3V0H4V3H3V2H-3V3H-4zM-2-2H3V-.5H-2z', l: 'M-3-3H1V-1H3V3H-3z', k: 'M-3.500-3H0V3H-3.500zM1-3H3.500V3H1z', t: 'M-2-3Q3-4 3 0L1 2 3 4-1 2-3 3-3-1z'
  };
  var icons = 'h380,340 a561,345 s372,391 h442,393 h391,439 d452,451 h510,456 a389,489 a502,498 d361,522 a374,554 a481,574 f384,594 a434,603 f555,578 h415,639 s578,656 f644,660 b678,656 s396,682 b431,701 l563,687 k659,703 a627,728 f537,727 a544,802 f388,791 h583,798 a363,827 a537,835 h388,882 d680,843 b429,881 c497,879 d536,883 b699,880 f614,898 d464,917 c383,906 f705,923 d357,871 b745,658 p737,698 t721,728 l838,639 s911,628 f883,666 l923,663 k991,644 c1024,716 k982,716 h959,748 k1051,717 w741,797 f743,854 m857,824 f922,845 w961,829 a1006,829 m787,855 f731,882 c1031,875 a882,902 k846,917 l977,930 f1004,931 l857,487 l969,473 m874,529 l946,577 l1009,586 h850,611 k1048,806';
  icons.split(' ').forEach(function (s) {
    var t = s[0], p = s.slice(1), g = add('g', { transform: 'translate(' + p + ')' });
    add('circle', { r: 6.500, fill: color[t], stroke: '#fff', 'stroke-width': .5 }, '', g);
    if (t === 'w' || t === 'p') add('text', { y: 3, 'text-anchor': 'middle', 'font-size': 8, 'font-weight': 700, 'class': 'glyph' }, t === 'w' ? 'W' : 'P', g);
    else add('path', { d: glyph[t], transform: t === 'd' ? '' : 'scale(.9)', 'class': 'glyph', style: t === 'd' ? 'fill:#83888f' : '' }, '', g);
  });
  labels.forEach(function (l) {
    l[0].split('|').forEach(function (line, i) {
      add('text', { x: l[1], y: l[2] + 4 + i * 11.800, 'class': 'lbl ' + (l[3] || ''), 'text-anchor': l[4] === 's' ? 'start' : l[4] === 'e' ? 'end' : 'middle' }, line);
    });
  });
  [[887,599],[881,618],[685,678],[826,699],[660,746],[693,785],[908,754],[1021,796]].forEach(function (p) {
    var g = add('g', { transform: 'translate(' + p + ')' });
    add('rect', { x: -7, y: -7, width: 14, height: 14, rx: 1, fill: '#4595f5', stroke: '#2f7ddb', 'stroke-width': .8 }, '', g);
    add('path', { 'fill-rule': 'evenodd', d: 'M-4-4H4V3H3V4H2V3H-2V4H-3V3H-4zM-2.500-2.500V0H2.500V-2.500zM-3 1V2H-2V1zM2 1V2H3V1z', 'class': 'glyph' }, '', g);
  });
  add('path', { d: 'M705 698Q702 690 696 683 691 673 697 667 705 660 713 667 719 673 714 683 708 690 705 698z', fill: '#1e88f5', stroke: '#1670d8', 'stroke-width': .8 });
  add('circle', { cx: 705, cy: 675, r: 6, fill: '#fff' });
  add('path', { d: 'M703 674H708L705.500 677z', fill: '#1e88f5' });
})();
```
